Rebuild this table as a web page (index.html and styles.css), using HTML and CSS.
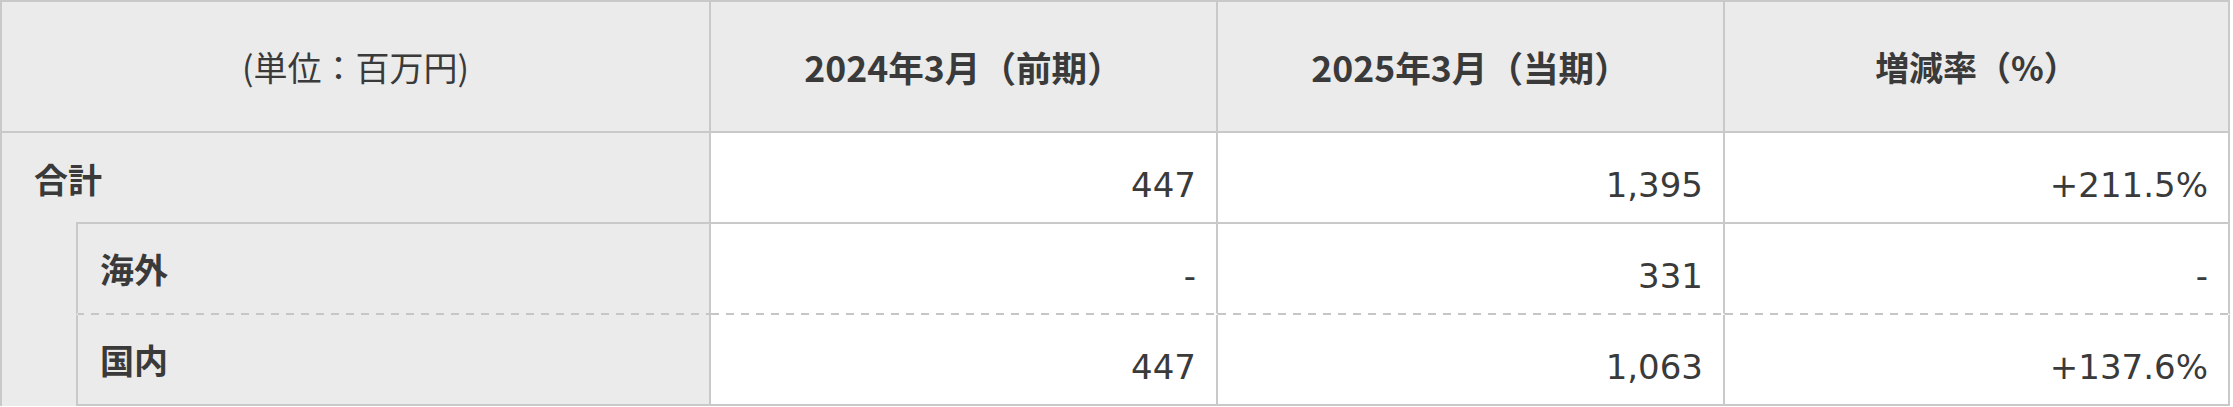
FILE: index.html
```html
<!DOCTYPE html>
<html lang="ja">
<head>
<meta charset="utf-8">
<title>売上高</title>
<link rel="stylesheet" href="styles.css">
</head>
<body>
<div class="tbl">
  <div class="hd hd-unit">(単位：百万円)</div>
  <div class="hd hd-year">2024年3月（前期）</div>
  <div class="hd hd-year">2025年3月（当期）</div>
  <div class="hd">増減率（%）</div>

  <div class="lbl lbl-total">合計</div>
  <div class="num">447</div>
  <div class="num">1,395</div>
  <div class="num">+211.5%</div>

  <div class="lbl lbl-sub dashed">海外</div>
  <div class="num dashed">-</div>
  <div class="num dashed">331</div>
  <div class="num dashed">-</div>

  <div class="lbl lbl-sub">国内</div>
  <div class="num">447</div>
  <div class="num">1,063</div>
  <div class="num">+137.6%</div>
</div>
</body>
</html>
```
FILE: styles.css
```css
html, body {
  margin: 0;
  padding: 0;
  background: #ffffff;
}

.tbl {
  box-sizing: border-box;
  width: 2230px;
  display: grid;
  grid-template-columns: 709px 507px 507px 505px;
  grid-template-rows: 131px 91px 91px 91px;
  border-top: 2px solid #c9c9c9;
  border-left: 2px solid #c9c9c9;
  background: #ebebeb;
  color: #3a3a3a;
  font-family: "Noto Sans CJK JP", "Noto Sans", sans-serif;
  font-size: 34px;
}

.tbl > div {
  box-sizing: border-box;
  display: flex;
  align-items: center;
  border-right: 2px solid #c9c9c9;
  border-bottom: 2px solid #c9c9c9;
  min-width: 0;
}

.hd {
  justify-content: center;
  font-weight: 700;
  background: #ebebeb;
}

.hd-unit {
  font-weight: 400;
}

.hd-year {
  font-size: 35.6px;
}

.lbl {
  font-weight: 700;
  background: #ebebeb;
}

.tbl > .lbl-total {
  padding-left: 32px;
  border-bottom: none;
  background:
    linear-gradient(#c9c9c9, #c9c9c9) no-repeat right bottom / calc(100% - 74px) 2px,
    #ebebeb;
}

.lbl-sub {
  margin-left: 74px;
  border-left: 2px solid #c9c9c9;
  padding-left: 22px;
}

.num {
  justify-content: flex-end;
  background: #ffffff;
  font-family: "DejaVu Sans", "Noto Sans", sans-serif;
  font-size: 34px;
  padding-right: 20px;
  padding-top: 14px;
  color: #3a3a3a;
}

.tbl > .dashed {
  border-bottom: 2px solid transparent;
  background:
    repeating-linear-gradient(90deg, #c6c6c6 0 8px, transparent 8px 15px) no-repeat left bottom / 100% 2px border-box,
    #ffffff;
}

.tbl > .lbl-sub.dashed {
  background:
    repeating-linear-gradient(90deg, #c6c6c6 0 8px, transparent 8px 15px) no-repeat left bottom / 100% 2px border-box,
    #ebebeb;
}
```
